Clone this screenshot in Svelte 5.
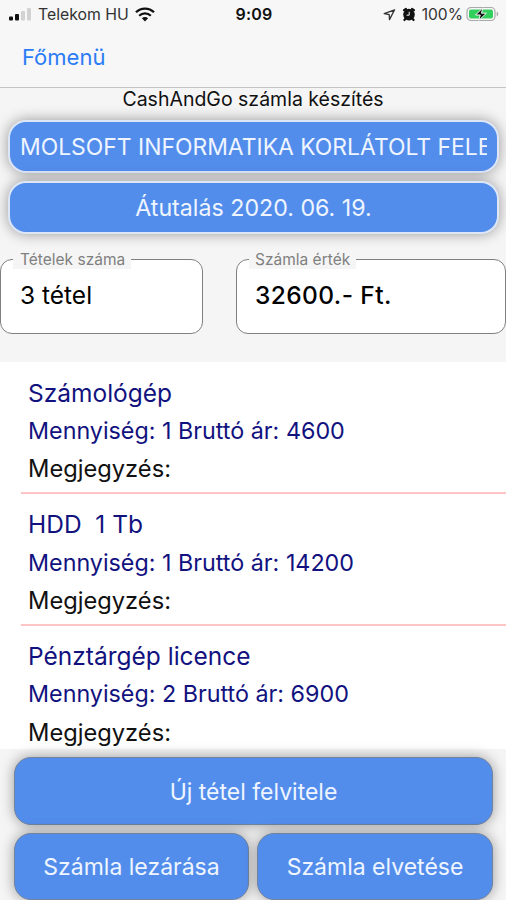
<script>
  const company = 'MOLSOFT INFORMATIKA KORLÁTOLT FELE';
  const payment = 'Átutalás 2020. 06. 19.';

  let items = [
    { name: 'Számológép', qty: 1, price: 4600, note: '' },
    { name: 'HDD  1 Tb', qty: 1, price: 14200, note: '' },
    { name: 'Pénztárgép licence', qty: 2, price: 6900, note: '' }
  ];
</script>

<div class="screen">
  <header>
    <div class="status">
      <div class="left">
        <svg class="signal" width="24" height="14" viewBox="0 0 24 14">
          <rect x="0" y="9.5" width="4" height="4" rx="1" fill="#111" />
          <rect x="6" y="7" width="4" height="6.5" rx="1" fill="#111" />
          <rect x="12" y="4" width="4" height="9.5" rx="1" fill="#d2d2d2" />
          <rect x="18" y="1" width="4" height="12.5" rx="1" fill="#d2d2d2" />
        </svg>
        <span class="carrier">Telekom HU</span>
        <svg class="wifi" width="20" height="15" viewBox="0 0 20 15">
          <path d="M1 5.3a12.8 12.8 0 0 1 18 0" fill="none" stroke="#111" stroke-width="2.3" />
          <path d="M4.2 8.7a8.3 8.3 0 0 1 11.6 0" fill="none" stroke="#111" stroke-width="2.2" />
          <path d="M10 14.4L6.9 11.3a4.4 4.4 0 0 1 6.2 0z" fill="#111" />
        </svg>
      </div>
      <span class="clock">9:09</span>
      <div class="right">
        <svg class="loc" width="13" height="13" viewBox="0 0 13 13">
          <path d="M11.6 1.8L1.2 5.6l5 1 .3 5z" fill="none" stroke="#333" stroke-width="1.3" stroke-linejoin="round" />
        </svg>
        <svg class="alarm" width="14" height="15" viewBox="0 0 14 15">
          <circle cx="7" cy="7.6" r="5.8" fill="#111" />
          <path d="M2 3.2L4 2M12 3.2L10 2M3.3 12L2.4 13M10.7 12L11.6 13" stroke="#111" stroke-width="2.2" stroke-linecap="round" />
          <path d="M7.2 4.8v3.4H4.6" fill="none" stroke="#f7f7f7" stroke-width="1" />
        </svg>
        <span class="percent">100%</span>
        <svg class="battery" width="33" height="16" viewBox="0 0 33 16">
          <rect x="1" y="1.5" width="28" height="13" rx="4" fill="#f7f7f7" stroke="#a9a9a9" stroke-width="1.2" />
          <rect x="3" y="3.5" width="24" height="9" rx="2" fill="#32cf5c" />
          <path d="M30.7 5.5v5q1.6-.8 1.6-2.5t-1.6-2.5z" fill="#a9a9a9" />
          <path d="M16.8 1.8L9.6 9h4.6l-1.4 5.4L20.4 7.2h-4.9z" fill="#111" stroke="#f7f7f7" stroke-width="1" />
        </svg>
      </div>
    </div>
    <div class="nav">
      <a href="#menu">Főmenü</a>
    </div>
  </header>

  <section class="top">
    <h1>CashAndGo számla készítés</h1>
    <button class="btn light company">{company}</button>
    <button class="btn light">{payment}</button>
    <div class="fields">
      <div class="field count">
        <span class="label">Tételek száma</span>
        <span class="value">{items.length} tétel</span>
      </div>
      <div class="field total">
        <span class="label">Számla érték</span>
        <span class="value">32600.- Ft.</span>
      </div>
    </div>
  </section>

  <ul class="list">
    {#each items as item}
      <li>
        <div class="name">{item.name}</div>
        <div class="detail">Mennyiség: {item.qty} Bruttó ár: {item.price}</div>
        <div class="note">Megjegyzés: {item.note}</div>
      </li>
    {/each}
  </ul>

  <footer>
    <button class="btn wide">Új tétel felvitele</button>
    <button class="btn">Számla lezárása</button>
    <button class="btn">Számla elvetése</button>
  </footer>
</div>

<style>
  :global(body) {
    background: #fff;
    overflow: hidden;
  }
  .screen {
    width: 506px;
    height: 900px;
    display: flex;
    flex-direction: column;
    overflow: hidden;
    background: #fff;
    font-family: Inter, "Liberation Sans", sans-serif;
    color: #111;
  }
  header {
    flex: none;
    height: 87px;
    background: #f7f7f7;
    border-bottom: 1px solid #c4c4c4;
  }
  .status {
    display: grid;
    grid-template-columns: 1fr auto 1fr;
    align-items: center;
    height: 28px;
    padding: 0 7px 0 9px;
    font-size: 16px;
  }
  .left, .right {
    display: flex;
    align-items: center;
  }
  .right {
    justify-content: flex-end;
  }
  .carrier {
    margin: 0 6px 0 5px;
    color: #333;
    font-size: 15.8px;
  }
  .clock {
    font-weight: 600;
    letter-spacing: 0.2px;
  }
  .alarm {
    margin: 0 6px 0 6px;
  }
  .percent {
    margin-right: 3px;
    color: #333;
    font-size: 15.6px;
  }
  .nav {
    padding: 15px 22px;
    line-height: 29px;
  }
  .nav a {
    color: #2b7cf6;
    font-size: 22px;
    text-decoration: none;
  }
  .top {
    flex: none;
    box-sizing: border-box;
    height: 274px;
    background: #f5f5f5;
  }
  h1 {
    margin: 0;
    height: 32px;
    line-height: 22px;
    font-size: 19.5px;
    font-weight: 400;
    text-align: center;
  }
  .btn {
    display: block;
    box-sizing: border-box;
    border: 1px solid #71839f;
    border-radius: 17px;
    background: #538dec;
    box-shadow: 0 0 14px rgba(0, 0, 0, 0.38);
    color: #eef5ff;
    font-family: inherit;
    font-size: 23px;
    padding: 1px 0 0;
    white-space: nowrap;
  }
  .btn.light {
    width: 491px;
    height: 53px;
    margin: 0 0 8px 8px;
    border: 2px solid #dce6f7;
    border-radius: 18px;
    padding: 0 10px;
    font-size: 23.2px;
  }
  .btn.company {
    font-size: 22.9px;
    text-align: left;
    overflow: clip;
    overflow-clip-margin: content-box;
  }
  .fields {
    display: flex;
    justify-content: space-between;
    margin-top: 25px;
  }
  .field {
    position: relative;
    box-sizing: border-box;
    height: 75px;
    border: 1px solid #808080;
    border-radius: 12px;
    background: #fff;
    padding: 21px 19px;
  }
  .count {
    width: 203px;
  }
  .total {
    width: 270px;
  }
  .label {
    position: absolute;
    top: -10px;
    left: 12px;
    padding: 0 6px 0 7px;
    background: #f5f5f5;
    color: #808080;
    font-size: 15.5px;
    line-height: 19px;
    white-space: nowrap;
  }
  .total .label {
    padding-left: 6px;
  }
  .value {
    display: block;
    font-size: 24.5px;
    line-height: 28px;
    color: #000;
  }
  .total .value {
    font-weight: 500;
    letter-spacing: 0.4px;
    margin-left: -1px;
  }
  .list {
    flex: none;
    box-sizing: border-box;
    height: 387px;
    margin: 0;
    padding: 0.6px 0 0 21px;
    list-style: none;
    overflow: hidden;
  }
  li {
    box-sizing: border-box;
    height: 131.6px;
    padding: 11px 0 0 7px;
    border-bottom: 2px solid #ffc4c4;
    font-size: 23.3px;
    line-height: 38.4px;
  }
  .name {
    font-size: 24.5px;
    white-space: pre;
  }
  .name, .detail {
    color: #12127f;
  }
  .note {
    font-size: 23.7px;
  }
  footer {
    flex: 1;
    display: grid;
    grid-template-columns: 235px 236px;
    grid-template-rows: 68px 67px;
    gap: 8px;
    padding: 8px 13px 0 14px;
    background: #f5f5f5;
    min-height: 0;
    box-sizing: border-box;
  }
  .wide {
    grid-column: 1 / 3;
  }
</style>
